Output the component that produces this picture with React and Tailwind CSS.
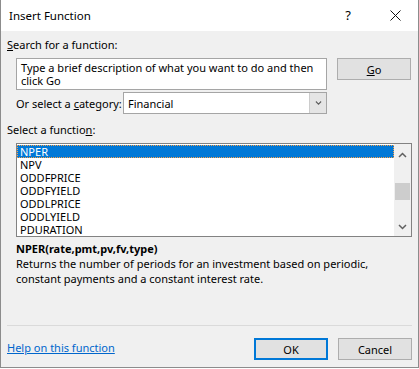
import React from 'react'

const items = ['NPER', 'NPV', 'ODDFPRICE', 'ODDFYIELD', 'ODDLPRICE', 'ODDLYIELD', 'PDURATION']

function Chevron({ up, className }) {
    return (
        <svg width="9" height="6" viewBox="0 0 9 6" className={className}>
            <path
                d={up ? 'M1 5 L4.5 1.5 L8 5' : 'M1 1 L4.5 4.5 L8 1'}
                fill="none"
                stroke="#606060"
                strokeWidth="1.5"
            />
        </svg>
    )
}

export default function App() {
    return (
        <div className="w-[419px] h-[369px] bg-white font-['Noto_Sans',sans-serif] text-[11px] text-black">
            <div className="w-[419px] h-[368px] border border-[#8c8c8c] border-t-0 bg-[#f0f0f0] flex flex-col">
                {/* title bar */}
                <div className="h-[31px] bg-white flex items-center pl-[8px]">
                    <span className="text-[11.5px] leading-[15px] flex-1">Insert Function</span>
                    <span className="w-[46px] text-center text-[13px] mr-[1px]">?</span>
                    <div className="w-[46px] h-[31px] flex items-center justify-center">
                        <svg width="11" height="11" viewBox="0 0 11 11">
                            <path d="M0.5 0.5 L10.5 10.5 M10.5 0.5 L0.5 10.5" stroke="#111" strokeWidth="1" />
                        </svg>
                    </div>
                </div>

                <div className="px-[6px] flex flex-col">
                    <div className="mt-[6px] leading-[15px]">
                        <u>S</u>earch for a function:
                    </div>

                    <div className="mt-[6px] flex items-start pl-[9px]">
                        <div className="w-[311px] h-[32px] bg-white border border-[#a5a5a5] px-[4px] leading-[13px] pt-[2px]">
                            Type a brief description of what you want to do and then click Go
                        </div>
                        <button className="ml-[10px] w-[74px] h-[22px] bg-[#e1e1e1] border border-[#adadad] leading-[15px]">
                            <u>G</u>o
                        </button>
                    </div>

                    <div className="mt-[2px] flex items-center pl-[9px]">
                        <span className="w-[107px] leading-[15px] whitespace-nowrap">
                            Or select a <u>c</u>ategory:
                        </span>
                        <div className="w-[204px] h-[22px] bg-white border border-[#a5a5a5] flex items-center">
                            <span className="flex-1 pl-[4px] leading-[15px]">Financial</span>
                            <div className="w-[17px] h-[20px] bg-[#e5e5e5] border-l border-[#cccccc] flex items-center justify-center">
                                <Chevron className="scale-75" />
                            </div>
                        </div>
                    </div>

                    <div className="mt-[8px] leading-[15px]">
                        Select a functio<u>n</u>:
                    </div>

                    <div className="mt-[6px] ml-[9px] w-[396px] h-[94px] bg-white border border-[#828282] flex">
                        <div className="flex-1 pt-[1px] flex flex-col">
                            {items.map((it, i) => (
                                <div
                                    key={it}
                                    className={
                                        i === 0
                                            ? 'h-[13px] leading-[13px] pl-[3px] bg-[#0078d7] text-white outline outline-1 outline-dotted outline-[#f7a14a] -outline-offset-1'
                                            : 'h-[13px] leading-[13px] pl-[3px]'
                                    }
                                >
                                    {it}
                                </div>
                            ))}
                        </div>
                        <div className="w-[17px] bg-[#f0f0f0] flex flex-col items-center">
                            <Chevron up className="mt-[8px]" />
                            <div className="mt-[25px] w-[15px] h-[17px] bg-[#cdcdcd]" />
                            <Chevron className="mt-[24px]" />
                        </div>
                    </div>

                    <div className="mt-[4px] ml-[9px] font-bold leading-[15px]">NPER(rate,pmt,pv,fv,type)</div>
                    <div className="ml-[9px] leading-[15px]">
                        Returns the number of periods for an investment based on periodic,
                        <br />
                        constant payments and a constant interest rate.
                    </div>

                    <div className="mt-[39px] w-[405px] h-[1px] bg-[#dadada]" />

                    <div className="mt-[12px] flex items-center">
                        <a className="flex-1 text-[#0066cc] underline leading-[15px] mt-[-4px]">Help on this function</a>
                        <button className="w-[74px] h-[22px] bg-[#e1e1e1] border-2 border-[#0078d7] leading-[15px]">OK</button>
                        <button className="ml-[10px] w-[74px] h-[22px] bg-[#e1e1e1] border border-[#adadad] leading-[15px]">Cancel</button>
                    </div>
                </div>
            </div>
        </div>
    )
}
